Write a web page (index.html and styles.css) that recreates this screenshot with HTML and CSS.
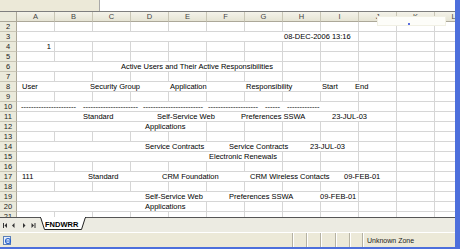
FILE: index.html
```html
<!DOCTYPE html>
<html>
<head>
<meta charset="utf-8">
<link rel="stylesheet" href="styles.css">
</head>
<body>
<div class="app">
  <div class="topbar"><div class="namebox"></div><div class="formula"></div></div>
  <div class="sheet">
    <div class="grid">
      <div class="corner"></div>
      <div class="h">A</div><div class="h">B</div><div class="h">C</div><div class="h">D</div><div class="h">E</div><div class="h">F</div><div class="h">G</div><div class="h">H</div><div class="h">I</div><div class="h">J</div><div class="h">K</div><div class="h">L</div>

      <div class="rh">2</div><div class="c"></div><div class="c"></div><div class="c"></div><div class="c"></div><div class="c"></div><div class="c"></div><div class="c"></div><div class="c"></div><div class="c"></div><div class="c"></div><div class="c"></div><div class="c"></div>

      <div class="rh">3</div><div class="m s9 l3"><span>08-DEC-2006 13:16</span></div><div class="c"></div><div class="c"></div><div class="c"></div>

      <div class="rh">4</div><div class="c num">1</div><div class="c"></div><div class="c"></div><div class="c"></div><div class="c"></div><div class="c"></div><div class="c"></div><div class="c"></div><div class="c"></div><div class="c"></div><div class="c"></div><div class="c"></div>

      <div class="rh">5</div><div class="c"></div><div class="c"></div><div class="c"></div><div class="c"></div><div class="c"></div><div class="c"></div><div class="c"></div><div class="c"></div><div class="c"></div><div class="c"></div><div class="c"></div><div class="c"></div>

      <div class="rh">6</div><div class="m s7 l6"><span>Active Users and Their Active Responsibilities</span></div><div class="c"></div><div class="c"></div><div class="c"></div><div class="c"></div><div class="c"></div>

      <div class="rh">7</div><div class="c"></div><div class="c"></div><div class="c"></div><div class="c"></div><div class="c"></div><div class="c"></div><div class="c"></div><div class="c"></div><div class="c"></div><div class="c"></div><div class="c"></div><div class="c"></div>

      <div class="rh">8</div><div class="m s10 l8"><span>User</span><span>Security Group</span><span>Application</span><span>Responsibility</span><span>Start</span><span>End</span></div><div class="c"></div><div class="c"></div>

      <div class="rh">9</div><div class="c"></div><div class="c"></div><div class="c"></div><div class="c"></div><div class="c"></div><div class="c"></div><div class="c"></div><div class="c"></div><div class="c"></div><div class="c"></div><div class="c"></div><div class="c"></div>

      <div class="rh">10</div><div class="m s9 l10"><span>----------------------</span><span>----------------------</span><span>------------------------</span><span>--------------------</span><span>------</span><span>-------------</span></div><div class="c"></div><div class="c"></div><div class="c"></div>

      <div class="rh">11</div><div class="m s10 l11"><span>Standard</span><span>Self-Service Web</span><span>Preferences SSWA</span><span>23-JUL-03</span></div><div class="c"></div><div class="c"></div>

      <div class="rh">12</div><div class="m s5 l12"><span>Applications</span></div><div class="c"></div><div class="c"></div><div class="c"></div><div class="c"></div><div class="c"></div><div class="c"></div><div class="c"></div>

      <div class="rh">13</div><div class="c"></div><div class="c"></div><div class="c"></div><div class="c"></div><div class="c"></div><div class="c"></div><div class="c"></div><div class="c"></div><div class="c"></div><div class="c"></div><div class="c"></div><div class="c"></div>

      <div class="rh">14</div><div class="m s9 l14"><span>Service Contracts</span><span>Service Contracts</span><span>23-JUL-03</span></div><div class="c"></div><div class="c"></div><div class="c"></div>

      <div class="rh">15</div><div class="m s7 l15"><span>Electronic Renewals</span></div><div class="c"></div><div class="c"></div><div class="c"></div><div class="c"></div><div class="c"></div>

      <div class="rh">16</div><div class="c"></div><div class="c"></div><div class="c"></div><div class="c"></div><div class="c"></div><div class="c"></div><div class="c"></div><div class="c"></div><div class="c"></div><div class="c"></div><div class="c"></div><div class="c"></div>

      <div class="rh">17</div><div class="m s10 l17"><span>111</span><span>Standard</span><span>CRM Foundation</span><span>CRM Wireless Contacts</span><span>09-FEB-01</span></div><div class="c"></div><div class="c"></div>

      <div class="rh">18</div><div class="c"></div><div class="c"></div><div class="c"></div><div class="c"></div><div class="c"></div><div class="c"></div><div class="c"></div><div class="c"></div><div class="c"></div><div class="c"></div><div class="c"></div><div class="c"></div>

      <div class="rh">19</div><div class="m s9 l19"><span>Self-Service Web</span><span>Preferences SSWA</span><span>09-FEB-01</span></div><div class="c"></div><div class="c"></div><div class="c"></div>

      <div class="rh">20</div><div class="m s5 l20"><span>Applications</span></div><div class="c"></div><div class="c"></div><div class="c"></div><div class="c"></div><div class="c"></div><div class="c"></div><div class="c"></div>

      <div class="rh">21</div><div class="c"></div><div class="c"></div><div class="c"></div><div class="c"></div><div class="c"></div><div class="c"></div><div class="c"></div><div class="c"></div><div class="c"></div><div class="c"></div><div class="c"></div><div class="c"></div>
    </div>
  </div>
  <div class="tabbar">
    <svg class="nav" width="40" height="15" viewBox="0 0 40 15">
      <rect x="3" y="5" width="1" height="5" fill="#333"/>
      <polygon points="4.5,7.5 7,5 7,10" fill="#333"/>
      <polygon points="12,7.5 14.5,5 14.5,10" fill="#333"/>
      <polygon points="25.5,7.5 23,5 23,10" fill="#333"/>
      <polygon points="34,7.5 31.5,5 31.5,10" fill="#333"/>
      <rect x="34.5" y="5" width="1" height="5" fill="#333"/>
    </svg>
    <div class="tab">
      <svg class="tabshape" width="46" height="14" viewBox="0 0 46 14">
        <polygon points="0.5,0 4.5,12.5 41.5,12.5 45.5,0" fill="#fff" stroke="#222" stroke-width="1"/>
        <rect x="1" y="0" width="44" height="1" fill="#fff"/>
      </svg>
      <span class="tabtext">FNDWRR</span>
    </div>
    <div class="hscroll"></div>
  </div>
  <div class="status">
    <div class="panel main">
      <svg width="9" height="9" viewBox="0 0 9 9">
        <rect x="0.5" y="0.5" width="7" height="8" fill="#e8f0fb" stroke="#5b7fb8"/>
        <circle cx="5" cy="5" r="2.5" fill="none" stroke="#2a64d0" stroke-width="1.2"/>
        <rect x="2.5" y="4.6" width="5" height="0.9" fill="#2a64d0"/>
      </svg>
    </div>
    <div class="panel p14"></div>
    <div class="panel p14"></div>
    <div class="panel p15"></div>
    <div class="panel p14"></div>
    <div class="panel p13"></div>
    <div class="panel zone">Unknown Zone</div>
    <div class="grip"></div>
  </div>
  <div class="tip"><span class="dot"></span></div>
</div>
</body>
</html>
```

FILE: styles.css
```css
* { box-sizing: border-box; }
html, body { margin: 0; padding: 0; }
body {
  width: 460px;
  height: 249px;
  overflow: hidden;
  background: #ece9d8;
  font-family: "Liberation Sans", Arial, sans-serif;
  font-size: 7.5px;
  line-height: 9px;
  color: #000;
}
.app {
  position: relative;
  width: 460px;
  height: 249px;
  border-right: 5px solid #4d6fdc;
  border-bottom: 2px solid #4d6fdc;
  display: flex;
  flex-direction: column;
  overflow: hidden;
}
.topbar {
  height: 12px;
  flex: none;
  display: flex;
  border-bottom: 1px solid #7f7f7f;
}
.namebox {
  width: 100px;
  background: #ece9d8;
  border-right: 1px solid #a9a9a9;
}
.formula {
  flex: 1;
  background: #fff;
}
.sheet {
  height: 205px;
  flex: none;
  overflow: hidden;
  background: #fff;
}
.grid {
  display: grid;
  grid-template-columns: 17px repeat(12, 38px);
  grid-auto-rows: 10px;
  width: 473px;
}
.corner, .h, .rh {
  background: #ebeadb;
  color: #444;
}
.corner {
  border-right: 1px solid #aca899;
  border-bottom: 1px solid #aca899;
}
.h {
  text-align: center;
  border-right: 1px solid #c9c6b6;
  border-bottom: 1px solid #aca899;
  line-height: 10px;
  background: linear-gradient(#f4f3ea, #e6e4d4);
}
.rh {
  text-align: center;
  border-right: 1px solid #aca899;
  border-bottom: 1px solid #c9c6b6;
  color: #222;
}
.c, .m {
  border-right: 1px solid #d6d6d6;
  border-bottom: 1px solid #d6d6d6;
  white-space: nowrap;
  overflow: hidden;
}
.num { text-align: right; padding-right: 3px; }
.m {
  display: grid;
  grid-auto-flow: column;
  grid-template-rows: 9px;
  justify-content: start;
}
.m span { white-space: nowrap; }
.s5 { grid-column: span 5; }
.s7 { grid-column: span 7; }
.s9 { grid-column: span 9; }
.s10 { grid-column: span 10; }

.l3 { padding-left: 267px; }
.l6 { padding-left: 104px; }
.l8 { padding-left: 5px; grid-template-columns: 68px 80px 76px 76px 33px auto; }
.l10 { padding-left: 4px; grid-template-columns: 57px 55px 60px 52px 17px 36px; column-gap: 5px; }
.l11 { padding-left: 66px; grid-template-columns: 74px 84px 91px auto; }
.l12, .l20 { padding-left: 128px; }
.l14 { padding-left: 128px; grid-template-columns: 84px 81px auto; }
.l15 { padding-left: 192px; }
.l17 { padding-left: 5px; grid-template-columns: 66px 74px 88px 94px auto; }
.l19 { padding-left: 128px; grid-template-columns: 84px 91px auto; }

.tabbar {
  height: 15px;
  flex: none;
  display: flex;
  align-items: flex-start;
  background: #ecebe2;
  border-top: 1px solid #555;
}
.nav { flex: none; display: block; }
.tab {
  position: relative;
  width: 46px;
  height: 14px;
  flex: none;
  margin-top: -1px;
}
.tabshape { display: block; }
.tabtext {
  position: absolute;
  left: 5px;
  top: 3px;
  font-weight: bold;
  font-size: 7.5px;
  line-height: 9px;
}
.hscroll { flex: 1; }
.status {
  height: 15px;
  flex: none;
  display: flex;
  background: #ece9d8;
  border-top: 1px solid #fff;
}
.panel {
  height: 100%;
  border-right: 1px solid #b5b2a3;
  box-shadow: 1px 0 0 #fff;
  display: flex;
  align-items: center;
  flex: none;
}
.main { width: 293px; padding-left: 3px; }
.p13 { width: 13px; }
.p14 { width: 14px; }
.p15 { width: 15px; }
.zone {
  width: 82px;
  padding-left: 4px;
  font-size: 7px;
  color: #222;
  border-right: none;
  box-shadow: none;
}
.grip { flex: 1; }
.tip {
  position: absolute;
  left: 377px;
  top: 16px;
  width: 69px;
  height: 10px;
  background: #fdfdf9;
  border: 1px solid #f1f0e4;
}
.dot {
  position: absolute;
  left: 30px;
  top: 6px;
  width: 2px;
  height: 2px;
  background: #5a6ee0;
}
```
